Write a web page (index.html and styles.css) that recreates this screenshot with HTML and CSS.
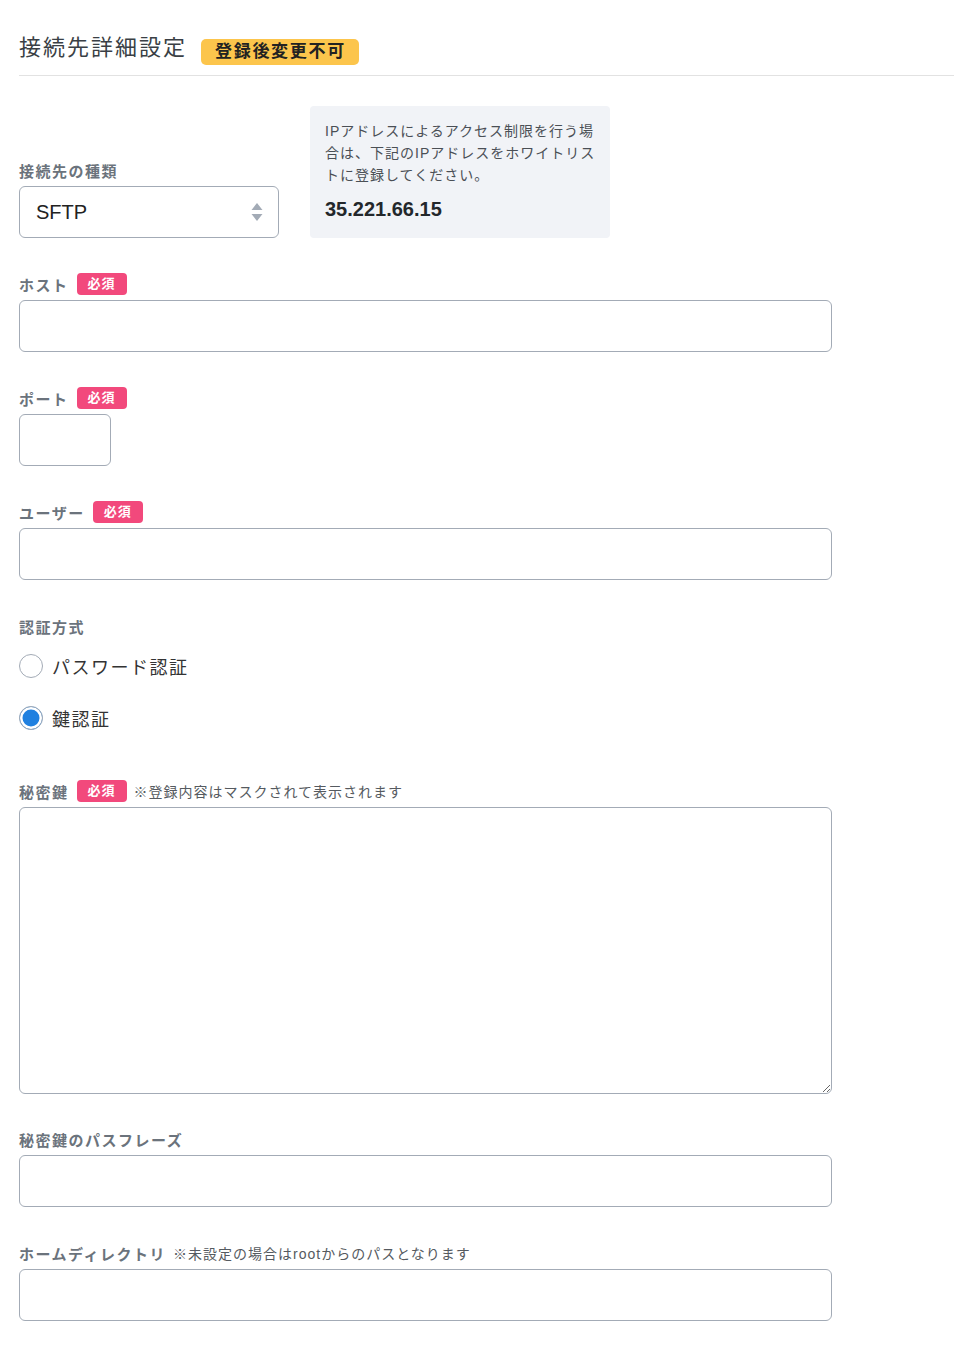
FILE: index.html
```html
<!DOCTYPE html>
<html lang="ja">
<head>
<meta charset="utf-8">
<title>接続先詳細設定</title>
<link rel="stylesheet" href="styles.css">
</head>
<body>
<div class="page">
  <div class="header">
    <h1 class="title">接続先詳細設定</h1>
    <span class="lock-badge">登録後変更不可</span>
  </div>

  <div class="top-row">
    <div class="field-inline">
      <div class="label-row"><span class="label">接続先の種類</span></div>
      <div class="select">
        <span class="select-value">SFTP</span>
        <svg class="select-arrows" width="12" height="20" viewBox="0 0 12 20">
          <path d="M6 1 L11.5 8 L0.5 8 Z" fill="#a3abb6"/>
          <path d="M6 19 L11.5 12 L0.5 12 Z" fill="#a3abb6"/>
        </svg>
      </div>
    </div>
    <div class="info-box">
      <p class="info-text">IPアドレスによるアクセス制限を行う場合は、下記のIPアドレスをホワイトリストに登録してください。</p>
      <p class="info-ip">35.221.66.15</p>
    </div>
  </div>

  <div class="field">
    <div class="label-row"><span class="label">ホスト</span><span class="req">必須</span></div>
    <div class="input wide"></div>
  </div>

  <div class="field">
    <div class="label-row"><span class="label">ポート</span><span class="req">必須</span></div>
    <div class="input small"></div>
  </div>

  <div class="field">
    <div class="label-row"><span class="label">ユーザー</span><span class="req">必須</span></div>
    <div class="input wide"></div>
  </div>

  <div class="field radios">
    <div class="label-row"><span class="label">認証方式</span></div>
    <div class="radio-item first"><span class="radio"></span><span class="radio-text">パスワード認証</span></div>
    <div class="radio-item second"><span class="radio checked"></span><span class="radio-text">鍵認証</span></div>
  </div>

  <div class="field field-textarea">
    <div class="label-row"><span class="label">秘密鍵</span><span class="req">必須</span><span class="note">※登録内容はマスクされて表示されます</span></div>
    <textarea class="textarea"></textarea>
  </div>

  <div class="field">
    <div class="label-row"><span class="label">秘密鍵のパスフレーズ</span></div>
    <div class="input wide"></div>
  </div>

  <div class="field">
    <div class="label-row"><span class="label">ホームディレクトリ</span><span class="note">※未設定の場合はrootからのパスとなります</span></div>
    <div class="input wide"></div>
  </div>
</div>
</body>
</html>
```

FILE: styles.css
```css
* { box-sizing: border-box; }
body {
  margin: 0;
  background: #fff;
  font-family: "Liberation Sans", Arial, "Noto Sans CJK JP", sans-serif;
  color: #333;
}
.page {
  margin-left: 19px;
  width: 935px;
  padding-bottom: 40px;
}
.header {
  display: flex;
  align-items: flex-start;
  padding-top: 33px;
  padding-bottom: 10px;
  border-bottom: 1px solid #e2e2e2;
}
.title {
  margin: 0;
  font-size: 22px;
  line-height: 30px;
  font-weight: normal;
  letter-spacing: 2px;
  color: #3a3f45;
}
.lock-badge {
  margin-top: 6px;
  margin-left: 14px;
  height: 26px;
  line-height: 26px;
  padding: 0 13px 0 14px;
  background: #fcc54c;
  border-radius: 5px;
  font-size: 17px;
  font-weight: bold;
  letter-spacing: 1.7px;
  color: #222;
}
.top-row {
  display: flex;
  align-items: flex-end;
  margin-top: 30px;
  margin-bottom: 34px;
}
.field-inline { width: 260px; }
.label-row {
  display: flex;
  align-items: center;
  height: 24px;
  margin-bottom: 4px;
}
.label {
  font-size: 15px;
  font-weight: bold;
  letter-spacing: 1.5px;
  color: #6b737c;
}
.req {
  margin-left: 8px;
  height: 22px;
  line-height: 22px;
  padding: 0 11px 0 11px;
  background: #f2497c;
  border-radius: 4px;
  color: #fff;
  font-size: 13px;
  font-weight: bold;
  letter-spacing: 1px;
}
.note {
  margin-left: 7px;
  font-size: 14px;
  letter-spacing: 1px;
  color: #555a60;
}
.select {
  display: flex;
  align-items: center;
  justify-content: space-between;
  width: 260px;
  height: 52px;
  padding: 0 15px 0 16px;
  border: 1px solid #a3abb6;
  border-radius: 6px;
}
.select-value {
  font-size: 20px;
  color: #222;
}
.info-box {
  width: 300px;
  margin-left: 31px;
  background: #f1f3f7;
  border-radius: 4px;
  padding: 14px 14px 15px 15px;
}
.info-text {
  margin: 0;
  font-size: 14px;
  line-height: 22px;
  letter-spacing: 1px;
  color: #4a4f55;
}
.info-ip {
  margin: 9px 0 0 0;
  font-size: 20px;
  line-height: 28px;
  font-weight: bold;
  color: #23272b;
}
.field { margin-bottom: 34px; }
.field-textarea { margin-bottom: 33px; }
.input {
  height: 52px;
  border: 1px solid #a3abb6;
  border-radius: 6px;
}
.input.wide { width: 813px; }
.input.small { width: 92px; }
.textarea {
  display: block;
  width: 813px;
  height: 287px;
  margin: 0;
  border: 1px solid #a3abb6;
  border-radius: 6px;
  resize: vertical;
  font-family: inherit;
}
.radios { margin-bottom: 49px; }
.radio-item {
  display: flex;
  align-items: center;
  height: 24px;
}
.radio-item.first { margin-top: 16px; }
.radio-item.second { margin-top: 28px; }
.radio {
  width: 24px;
  height: 24px;
  border-radius: 50%;
  border: 1px solid #a3abb6;
  background: #fff;
}
.radio.checked {
  background: #1f80e0;
  box-shadow: inset 0 0 0 2.5px #fff;
}
.radio-text {
  margin-left: 9px;
  font-size: 18px;
  letter-spacing: 1.5px;
  color: #333;
}
```
